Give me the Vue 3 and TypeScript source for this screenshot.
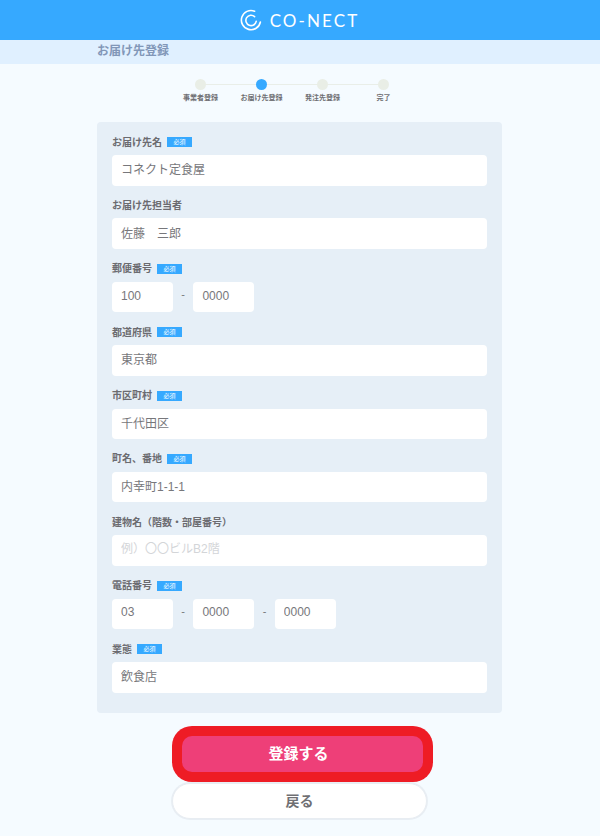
<script setup lang="ts">
interface Field {
  label: string
  required: boolean
  parts: string[]
  placeholder?: string
}
const steps: { label: string; active: boolean }[] = [
  { label: '事業者登録', active: false },
  { label: 'お届け先登録', active: true },
  { label: '発注先登録', active: false },
  { label: '完了', active: false },
]
const fields: Field[] = [
  { label: 'お届け先名', required: true, parts: ['コネクト定食屋'] },
  { label: 'お届け先担当者', required: false, parts: ['佐藤　三郎'] },
  { label: '郵便番号', required: true, parts: ['100', '0000'] },
  { label: '都道府県', required: true, parts: ['東京都'] },
  { label: '市区町村', required: true, parts: ['千代田区'] },
  { label: '町名、番地', required: true, parts: ['内幸町1-1-1'] },
  { label: '建物名（階数・部屋番号）', required: false, parts: [''], placeholder: '例）〇〇ビルB2階' },
  { label: '電話番号', required: true, parts: ['03', '0000', '0000'] },
  { label: '業態', required: true, parts: ['飲食店'] },
]
</script>

<template>
  <div class="page">
    <header class="top">
      <svg class="logo" width="22" height="22" viewBox="0 0 22 22" fill="none" stroke="#fff" stroke-width="1.6" stroke-linecap="round">
        <path d="M14.6 2.2A9.6 9.6 0 1 0 20.4 13" />
        <path d="M14.6 7.6A5.2 5.2 0 1 0 16.2 12.4" />
      </svg>
      <span class="brand">CO-NECT</span>
    </header>
    <div class="subbar"><h1>お届け先登録</h1></div>
    <ol class="steps">
      <li v-for="s in steps" :key="s.label" class="step">
        <span class="dot" :class="{ on: s.active }"></span>
        <span class="step-label">{{ s.label }}</span>
      </li>
    </ol>
    <form class="card" @submit.prevent>
      <div v-for="f in fields" :key="f.label" class="field">
        <div class="label">
          <span class="label-text">{{ f.label }}</span>
          <em v-if="f.required" class="req">必須</em>
        </div>
        <div v-if="f.parts.length === 1">
          <input class="input" :value="f.parts[0]" :placeholder="f.placeholder" />
        </div>
        <div v-else class="split">
          <template v-for="(p, i) in f.parts" :key="i">
            <span v-if="i > 0" class="dash">-</span>
            <input class="input short" :value="p" />
          </template>
        </div>
      </div>
    </form>
    <div class="actions">
      <button class="btn primary" type="button">登録する</button>
      <button class="btn back" type="button">戻る</button>
    </div>
  </div>
</template>

<style>
html, body { margin: 0; background: #f5fbff; }
</style>

<style scoped>
.page {
  width: 600px;
  height: 836px;
  overflow: hidden;
  background: #f5fbff;
  font-family: "Liberation Sans", "Noto Sans CJK JP", sans-serif;
  color: #6f6f73;
}
.top {
  height: 40px;
  background: #36a9ff;
  display: flex;
  align-items: center;
  justify-content: center;
  gap: 8px;
  padding-right: 1px;
  box-sizing: border-box;
}
.brand {
  font-family: Lato, "Liberation Sans", sans-serif;
  color: #fff;
  font-size: 17px;
  letter-spacing: 2.1px;
}
.subbar {
  height: 24px;
  background: #e0f0ff;
  padding-left: 97px;
}
h1 {
  margin: 0;
  font-size: 12px;
  line-height: 22px;
  font-weight: 700;
  color: #8297b8;
}
.steps {
  list-style: none;
  margin: 0 0 0 170px;
  padding: 15px 0 0;
  height: 58px;
  box-sizing: border-box;
  width: 244px;
  display: grid;
  grid-template-columns: repeat(4, 61px);
  position: relative;
}
.steps::before {
  content: "";
  position: absolute;
  left: 30px;
  right: 30px;
  top: 20px;
  height: 1px;
  background: #e9eee8;
}
.step {
  display: flex;
  flex-direction: column;
  align-items: center;
  position: relative;
}
.dot {
  width: 11px;
  height: 11px;
  border-radius: 50%;
  background: #e9eee6;
}
.dot.on { background: #36a9ff; }
.step-label {
  margin-top: 2px;
  font-size: 7px;
  line-height: 11px;
  font-weight: 700;
  color: #6f6f73;
  white-space: nowrap;
}
.card {
  width: 405px;
  height: 591px;
  margin: 0 auto 0 97px;
  box-sizing: border-box;
  padding: 12px 15px 0;
  background: #e6eff7;
  border-radius: 4px;
}
.field { height: 63.4px; }
.label {
  height: 21px;
  padding-bottom: 5px;
  box-sizing: border-box;
  display: flex;
  align-items: center;
  gap: 5px;
  font-size: 10px;
  font-weight: 700;
  color: #6b6b70;
}
.label-text { margin-top: -2px; }
.req {
  font-style: normal;
  width: 25px;
  height: 10px;
  background: #36a9ff;
  color: #fff;
  font-size: 6px;
  line-height: 10px;
  text-align: center;
  font-weight: 400;
}
.input {
  display: block;
  width: 375px;
  height: 30.5px;
  box-sizing: border-box;
  border: 0;
  border-radius: 4px;
  background: #fff;
  padding: 0 9px 3px;
  font: 400 12px "Liberation Sans", "Noto Sans CJK JP", sans-serif;
  color: #77777b;
  outline: none;
}
.input::placeholder { color: #d3d5d8; opacity: 1; }
.input.short { width: 61px; }
.split { display: flex; align-items: center; }
.dash {
  width: 20.4px;
  text-align: center;
  font-size: 11px;
  color: #77777b;
  position: relative;
  top: -3px;
}
.actions {
  margin-top: 23px;
  margin-left: 172px;
  width: 255px;
}
.btn {
  display: block;
  box-sizing: border-box;
  font: 700 14px "Liberation Sans", "Noto Sans CJK JP", sans-serif;
  cursor: pointer;
}
.primary {
  width: 241px;
  height: 36px;
  margin: 0 0 0 10px;
  padding: 0 8px 4px 0;
  font-size: 15px;
  background: #ee3f78;
  color: #fff;
  border: 0;
  border-radius: 10px;
  box-shadow: 0 0 0 10px #ee1c25;
}
.back {
  width: 255px;
  height: 36px;
  margin-top: 11px;
  padding: 0 0 3px;
  background: #fff;
  color: #6f6f73;
  border: 1px solid #e8edf2;
  border-radius: 18px;
  box-shadow: 0 0 0 1px #e8eef4;
}
</style>
